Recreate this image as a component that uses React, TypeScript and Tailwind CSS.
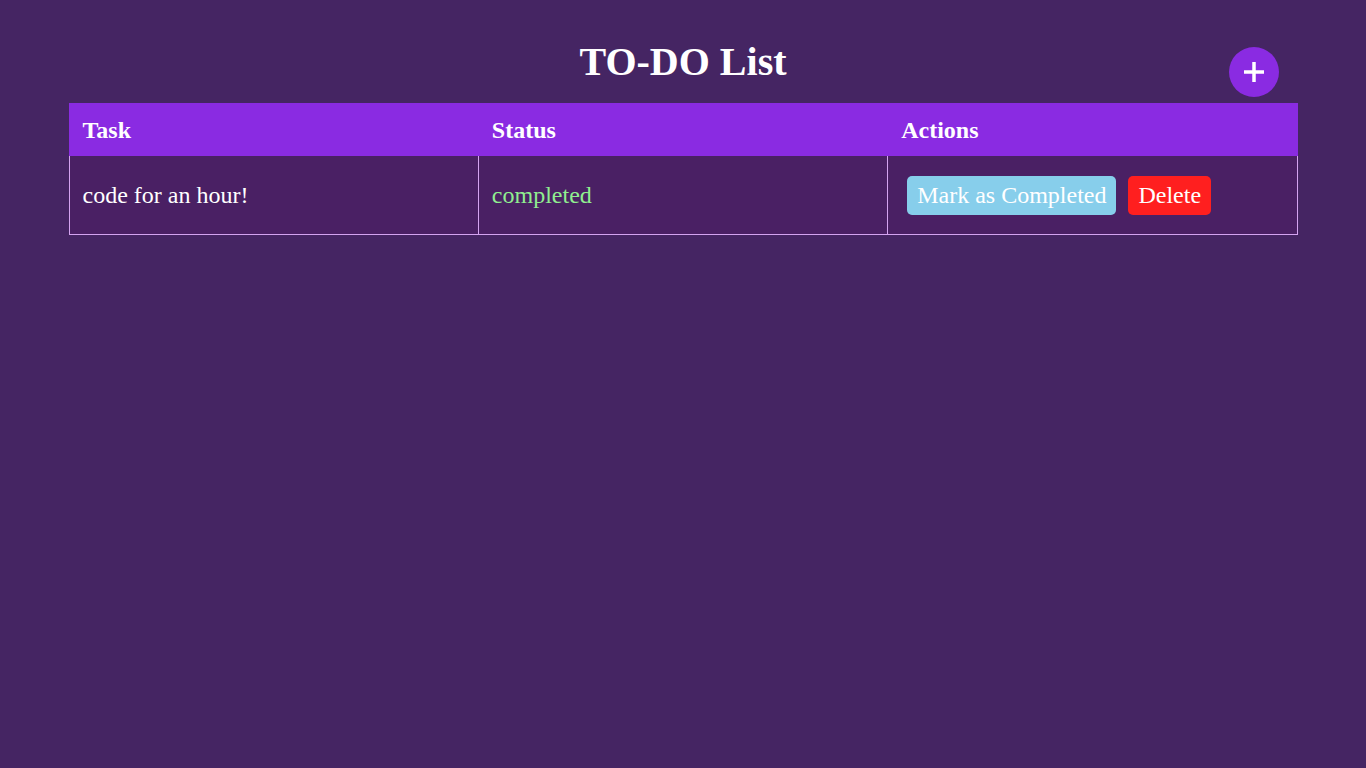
const tasks = [{ id: 1, title: "code for an hour!", status: "completed" }];

const App: React.FC = () => {
  return (
    <div
      className="relative min-h-screen w-full bg-[#452563] text-white"
      style={{ fontFamily: '"Liberation Serif", "Times New Roman", serif' }}
    >
      {/* Add button */}
      <button
        className="absolute top-[47px] right-[87px] flex h-[50px] w-[50px] items-center justify-center rounded-full bg-[#8a2be2] text-white"
        aria-label="Add task"
      >
        <svg width="22" height="22" viewBox="0 0 22 22" fill="none" stroke="currentColor" strokeWidth="3.5">
          <line x1="11" y1="1" x2="11" y2="21" />
          <line x1="1" y1="11" x2="21" y2="11" />
        </svg>
      </button>

      {/* Title */}
      <h1 className="pt-[39px] text-center text-[40px] font-bold leading-[46px]">TO-DO List</h1>

      {/* Task table */}
      <table className="mx-auto mt-[18px] w-[1229px] table-fixed border-collapse text-[24px] leading-[28px]">
        <thead>
          <tr className="bg-[#8a2be2]">
            <th className="border border-[#8a2be2] px-[13px] pt-[12px] pb-[11px] text-left font-bold">Task</th>
            <th className="border border-[#8a2be2] px-[13px] pt-[12px] pb-[11px] text-left font-bold">Status</th>
            <th className="border border-[#8a2be2] px-[13px] pt-[12px] pb-[11px] text-left font-bold">Actions</th>
          </tr>
        </thead>
        <tbody>
          {tasks.map((task) => (
            <tr key={task.id} className="bg-[#4a2064]">
              <td className="border border-[#d4a4f0] px-[13px] pt-[19px] pb-[20px]">{task.title}</td>
              <td className="border border-[#d4a4f0] px-[13px] pt-[19px] pb-[20px] text-[#90ee90]">{task.status}</td>
              <td className="border border-[#d4a4f0] px-[13px] pt-[20px] pb-[19px]">
                <div className="ml-[6px] flex gap-3">
                  <button className="rounded-[5px] bg-[#87ceeb] px-[10px] py-[6px] leading-[27px] text-white">
                    Mark as Completed
                  </button>
                  <button className="rounded-[5px] bg-[#ff1f1f] px-[10px] py-[6px] leading-[27px] text-white">
                    Delete
                  </button>
                </div>
              </td>
            </tr>
          ))}
        </tbody>
      </table>
    </div>
  );
};

export default App;
